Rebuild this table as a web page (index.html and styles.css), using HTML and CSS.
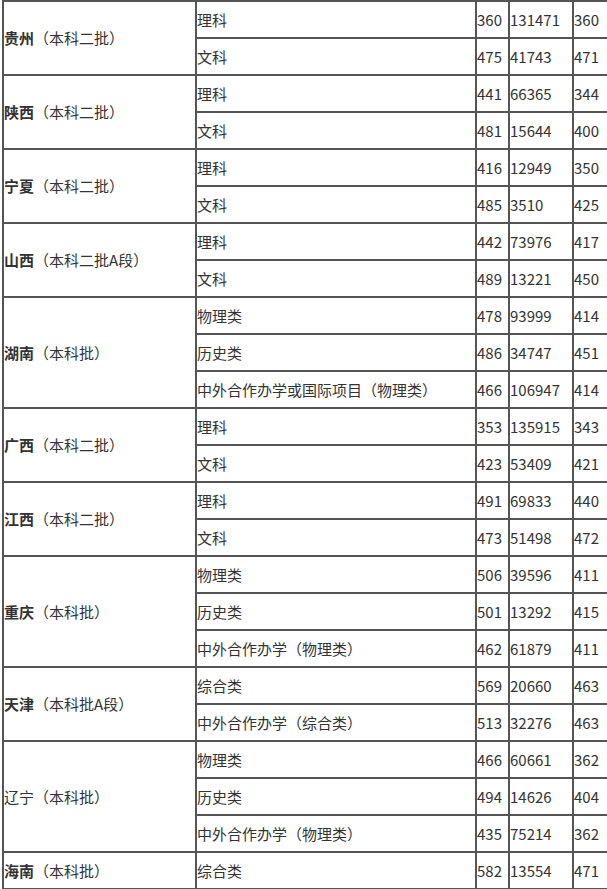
FILE: index.html
```html
<!DOCTYPE html>
<html lang="zh-CN">
<head>
<meta charset="utf-8">
<title>分数线</title>
<link rel="stylesheet" href="styles.css">
</head>
<body>
<table class="score">
<colgroup>
<col class="c1"><col class="c2"><col class="c3"><col class="c4"><col class="c5">
</colgroup>
<tbody>
<tr><td rowspan="2"><b>贵州</b>（本科二批）</td><td>理科</td><td>360</td><td>131471</td><td>360</td></tr>
<tr><td>文科</td><td>475</td><td>41743</td><td>471</td></tr>
<tr><td rowspan="2"><b>陕西</b>（本科二批）</td><td>理科</td><td>441</td><td>66365</td><td>344</td></tr>
<tr><td>文科</td><td>481</td><td>15644</td><td>400</td></tr>
<tr><td rowspan="2"><b>宁夏</b>（本科二批）</td><td>理科</td><td>416</td><td>12949</td><td>350</td></tr>
<tr><td>文科</td><td>485</td><td>3510</td><td>425</td></tr>
<tr><td rowspan="2"><b>山西</b>（本科二批A段）</td><td>理科</td><td>442</td><td>73976</td><td>417</td></tr>
<tr><td>文科</td><td>489</td><td>13221</td><td>450</td></tr>
<tr><td rowspan="3"><b>湖南</b>（本科批）</td><td>物理类</td><td>478</td><td>93999</td><td>414</td></tr>
<tr><td>历史类</td><td>486</td><td>34747</td><td>451</td></tr>
<tr><td>中外合作办学或国际项目（物理类）</td><td>466</td><td>106947</td><td>414</td></tr>
<tr><td rowspan="2"><b>广西</b>（本科二批）</td><td>理科</td><td>353</td><td>135915</td><td>343</td></tr>
<tr><td>文科</td><td>423</td><td>53409</td><td>421</td></tr>
<tr><td rowspan="2"><b>江西</b>（本科二批）</td><td>理科</td><td>491</td><td>69833</td><td>440</td></tr>
<tr><td>文科</td><td>473</td><td>51498</td><td>472</td></tr>
<tr><td rowspan="3"><b>重庆</b>（本科批）</td><td>物理类</td><td>506</td><td>39596</td><td>411</td></tr>
<tr><td>历史类</td><td>501</td><td>13292</td><td>415</td></tr>
<tr><td>中外合作办学（物理类）</td><td>462</td><td>61879</td><td>411</td></tr>
<tr><td rowspan="2"><b>天津</b>（本科批A段）</td><td>综合类</td><td>569</td><td>20660</td><td>463</td></tr>
<tr><td>中外合作办学（综合类）</td><td>513</td><td>32276</td><td>463</td></tr>
<tr><td rowspan="3">辽宁（本科批）</td><td>物理类</td><td>466</td><td>60661</td><td>362</td></tr>
<tr><td>历史类</td><td>494</td><td>14626</td><td>404</td></tr>
<tr><td>中外合作办学（物理类）</td><td>435</td><td>75214</td><td>362</td></tr>
<tr><td><b>海南</b>（本科批）</td><td>综合类</td><td>582</td><td>13554</td><td>471</td></tr>
</tbody>
</table>
</body>
</html>
```

FILE: styles.css
```css
html, body {
  margin: 0;
  padding: 0;
  background: #fff;
  overflow: hidden;
}
body {
  width: 607px;
  height: 889px;
}
.score {
  margin-left: 2px;
  border-collapse: separate;
  border-spacing: 0;
  table-layout: fixed;
  width: 660px;
  border-top: 2px solid #555;
  border-left: 2px solid #555;
  font-family: "Noto Sans CJK SC", "Noto Sans", sans-serif;
  font-size: 15px;
  color: #333;
}
.c1 { width: 193px; }
.c2 { width: 280px; }
.c3 { width: 33px; }
.c4 { width: 64px; }
.c5 { width: 88px; }
.score td {
  box-sizing: border-box;
  height: 37px;
  padding: 0;
  border-right: 2px solid #555;
  border-bottom: 2px solid #555;
  vertical-align: middle;
  text-align: left;
  white-space: nowrap;
  overflow: hidden;
  line-height: 20px;
}
.score b {
  font-weight: bold;
}
```
